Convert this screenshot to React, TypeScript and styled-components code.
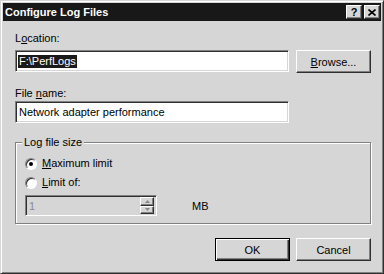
import React from "react";
import styled, { createGlobalStyle } from "styled-components";

const GlobalStyle = createGlobalStyle`
  body {
    margin: 0;
    background: #d6d6d6;
  }
`;

const Window = styled.div`
  width: 384px;
  height: 274px;
  box-sizing: border-box;
  background: #d6d6d6;
  border: 1px solid;
  border-color: #d6d6d6 #303030 #303030 #d6d6d6;
  box-shadow: inset 1px 1px #fff, inset -1px -1px #808080;
  padding: 2px;
  display: flex;
  flex-direction: column;
  font-family: "Liberation Sans", Arial, sans-serif;
  font-size: 11px;
  color: #000;
`;

const TitleBar = styled.div`
  height: 18px;
  background: #181818;
  display: flex;
  align-items: center;
  padding: 0 1px 0 2px;
  gap: 2px;
`;

const Title = styled.div`
  flex: 1;
  color: #fff;
  font-weight: bold;
  font-size: 11px;
`;

const CaptionButton = styled.div`
  width: 16px;
  height: 14px;
  box-sizing: border-box;
  background: #d6d6d6;
  border: 1px solid;
  border-color: #fff #303030 #303030 #fff;
  box-shadow: inset -1px -1px #808080;
  display: flex;
  align-items: center;
  justify-content: center;
  font-weight: bold;
  font-size: 11px;
  line-height: 1;
`;

const Body = styled.div`
  flex: 1;
  display: flex;
  flex-direction: column;
  padding: 11px 10px 0 12px;
`;

const Label = styled.div<{ $top?: number }>`
  line-height: 13px;
  height: 13px;
  margin-top: ${(p) => p.$top ?? 0}px;
`;

const Row = styled.div<{ $top?: number }>`
  display: flex;
  gap: 7px;
  margin-top: ${(p) => p.$top ?? 0}px;
`;

const TextBox = styled.div<{ $disabled?: boolean }>`
  box-sizing: border-box;
  height: 22px;
  width: 274px;
  background: ${(p) => (p.$disabled ? "#d6d6d6" : "#fff")};
  color: ${(p) => (p.$disabled ? "#8a8a8a" : "#000")};
  border: 1px solid;
  border-color: #808080 #fff #fff #808080;
  box-shadow: inset 1px 1px #303030, inset -1px -1px #d6d6d6;
  display: flex;
  align-items: center;
  padding-left: 2px;
`;

const Selected = styled.span`
  background: #1a1a1a;
  color: #fff;
  padding: 0 1px;
  line-height: 13px;
`;

const Plain = styled.span`
  padding-left: 1px;
`;

const Button = styled.div<{ $default?: boolean }>`
  width: 75px;
  height: 23px;
  box-sizing: border-box;
  background: #d6d6d6;
  border: 1px solid;
  border-color: ${(p) => (p.$default ? "#000" : "#fff #303030 #303030 #fff")};
  box-shadow: ${(p) =>
    p.$default
      ? "inset 1px 1px #fff, inset -1px -1px #303030, inset -2px -2px #808080"
      : "inset -1px -1px #808080"};
  display: flex;
  align-items: center;
  justify-content: center;
`;

const Group = styled.div`
  position: relative;
  margin-top: 19px;
  width: 356px;
  box-sizing: border-box;
  border: 1px solid #808080;
  box-shadow: inset 1px 1px #fff, 1px 1px #fff;
  padding: 14px 0 7px 9px;
  display: flex;
  flex-direction: column;
  gap: 6px;
`;

const Legend = styled.div`
  position: absolute;
  top: -7px;
  left: 6px;
  padding: 0 2px;
  background: #d6d6d6;
  line-height: 13px;
`;

const RadioRow = styled.div`
  display: flex;
  align-items: center;
  gap: 5px;
  height: 13px;
  line-height: 13px;
`;

const RadioDot = styled.span<{ $checked?: boolean }>`
  width: 12px;
  height: 12px;
  box-sizing: border-box;
  border-radius: 50%;
  background: #fff;
  border: 1px solid;
  border-color: #808080 #fff #fff #808080;
  box-shadow: inset 1px 1px #303030;
  display: flex;
  align-items: center;
  justify-content: center;

  &::after {
    content: "";
    width: 4px;
    height: 4px;
    border-radius: 50%;
    background: ${(p) => (p.$checked ? "#000" : "transparent")};
  }
`;

const SpinRow = styled.div`
  display: flex;
  align-items: center;
  gap: 35px;
`;

const SpinBox = styled(TextBox)`
  width: 132px;
  height: 21px;
  padding-right: 2px;
`;

const SpinText = styled.div`
  flex: 1;
  padding-left: 1px;
`;

const SpinButtons = styled.div`
  display: flex;
  flex-direction: column;
  width: 14px;
  height: 17px;
`;

const SpinButton = styled.div`
  flex: 1;
  box-sizing: border-box;
  border: 1px solid;
  border-color: #fff #303030 #303030 #fff;
  box-shadow: inset -1px -1px #808080;
  display: flex;
  align-items: center;
  justify-content: center;
`;

const Footer = styled.div`
  display: flex;
  justify-content: flex-end;
  gap: 6px;
  margin-top: 14px;
`;

const Arrow = ({ up }: { up?: boolean }) => (
  <svg width="5" height="3" viewBox="0 0 5 3">
    <path d={up ? "M2.5 0 L5 3 L0 3 Z" : "M0 0 L5 0 L2.5 3 Z"} fill="#8a8a8a" />
  </svg>
);

export default function App() {
  return (
    <>
      <GlobalStyle />
      <Window>
        <TitleBar>
          <Title>Configure Log Files</Title>
          <CaptionButton>?</CaptionButton>
          <CaptionButton>
            <svg width="8" height="7" viewBox="0 0 8 7">
              <path d="M0.5 0.5 L7.5 6.5 M7.5 0.5 L0.5 6.5" stroke="#000" strokeWidth="1.6" />
            </svg>
          </CaptionButton>
        </TitleBar>
        <Body>
          <Label>
            L<u>o</u>cation:
          </Label>
          <Row $top={5}>
            <TextBox>
              <Selected>F:\PerfLogs</Selected>
            </TextBox>
            <Button>
              <span>
                <u>B</u>rowse...
              </span>
            </Button>
          </Row>
          <Label $top={14}>
            File <u>n</u>ame:
          </Label>
          <Row $top={1}>
            <TextBox>
              <Plain>Network adapter performance</Plain>
            </TextBox>
          </Row>
          <Group>
            <Legend>Log file size</Legend>
            <RadioRow>
              <RadioDot $checked />
              <span>
                <u>M</u>aximum limit
              </span>
            </RadioRow>
            <RadioRow>
              <RadioDot />
              <span>
                <u>L</u>imit of:
              </span>
            </RadioRow>
            <SpinRow>
              <SpinBox $disabled>
                <SpinText>1</SpinText>
                <SpinButtons>
                  <SpinButton>
                    <Arrow up />
                  </SpinButton>
                  <SpinButton>
                    <Arrow />
                  </SpinButton>
                </SpinButtons>
              </SpinBox>
              <span>MB</span>
            </SpinRow>
          </Group>
          <Footer>
            <Button $default>OK</Button>
            <Button>Cancel</Button>
          </Footer>
        </Body>
      </Window>
    </>
  );
}
